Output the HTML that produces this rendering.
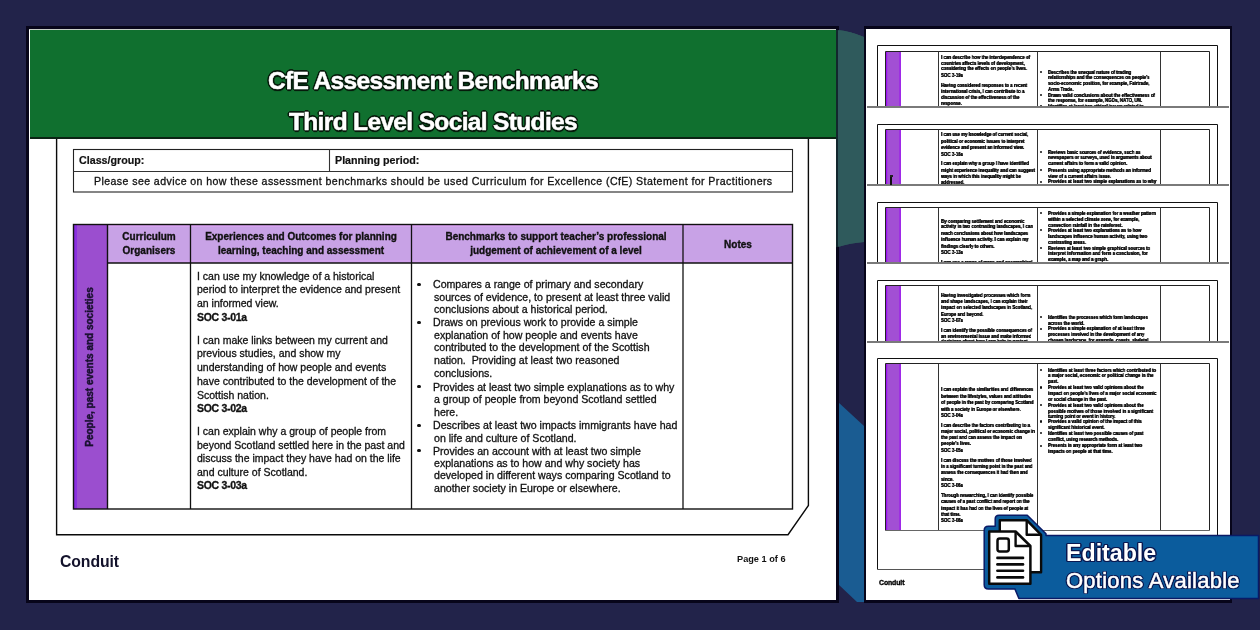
<!DOCTYPE html><html><head><meta charset="utf-8"><style>
html,body{margin:0;padding:0;}
body{width:1260px;height:630px;overflow:hidden;position:relative;background:#22234a;font-family:"Liberation Sans",sans-serif;}
.t{position:absolute;white-space:nowrap;line-height:1;will-change:transform;}
.r{position:absolute;}
</style></head><body>
<svg style="position:absolute;left:0;top:0" width="1260" height="630">
<path d="M836,30 Q850,31 864,37 L864,242 Q850,243 838,247 Z" fill="#2f5a5c"/>
<path d="M838,402 L864,426 L864,602 L857,602 L838,584 Z" fill="#1a5c92"/>
</svg>
<div class="r" style="left:26.00px;top:26.00px;width:813.00px;height:577.00px;background:#07051a;"></div>
<div class="r" style="left:29.00px;top:29.00px;width:807.00px;height:571.00px;background:#ffffff;"></div>
<div class="r" style="left:29.00px;top:29.00px;width:807.00px;height:1.00px;background:#c9cfc9;"></div>
<div class="r" style="left:30.00px;top:30.00px;width:806.00px;height:107.00px;background:#10702f;"></div>
<div class="r" style="left:30.00px;top:137.00px;width:806.00px;height:2.00px;background:#0b2414;"></div>
<svg style="position:absolute;left:0;top:0" width="1260" height="630">
<path d="M837.6,30 Q850,31 864,37 L864,242 Q850,243 837.6,247 Z" fill="#2f5a5c"/>
<path d="M836,30 L837.6,30 L837.6,247 L836,247.3 Z" fill="#12282c"/>
</svg>
<div class="t" style="left:33.00px;width:800px;text-align:center;top:68.56px;font-size:24.5px;font-weight:bold;color:#fff;letter-spacing:-0.65px;text-shadow:-1.2px -1.2px 0 #061a0b,1.2px -1.2px 0 #061a0b,-1.2px 1.2px 0 #061a0b,1.2px 1.2px 0 #061a0b,0 1.8px 0 #061a0b,0 -1.8px 0 #061a0b,1.8px 0 0 #061a0b,-1.8px 0 0 #061a0b,0.6px 2px 1px #061a0b;-webkit-text-stroke:0.5px #fff;">CfE Assessment Benchmarks</div>
<div class="t" style="left:33.00px;width:800px;text-align:center;top:109.96px;font-size:24.5px;font-weight:bold;color:#fff;letter-spacing:-0.65px;text-shadow:-1.2px -1.2px 0 #061a0b,1.2px -1.2px 0 #061a0b,-1.2px 1.2px 0 #061a0b,1.2px 1.2px 0 #061a0b,0 1.8px 0 #061a0b,0 -1.8px 0 #061a0b,1.8px 0 0 #061a0b,-1.8px 0 0 #061a0b,0.6px 2px 1px #061a0b;-webkit-text-stroke:0.5px #fff;">Third Level Social Studies</div>
<svg style="position:absolute;left:0;top:0" width="1260" height="630">
<polyline points="56.6,139 56.6,534.7 788,534.7 808.4,505.5 808.4,139" fill="none" stroke="#0a0a0a" stroke-width="1.4"/>
</svg>
<svg style="position:absolute;left:0;top:0" width="1260" height="630">
<rect x="73.5" y="149.5" width="719" height="42.5" fill="none" stroke="#222" stroke-width="1.1"/>
<line x1="73.5" y1="171.5" x2="792.5" y2="171.5" stroke="#333" stroke-width="1.1"/>
<line x1="329.5" y1="149.5" x2="329.5" y2="171.5" stroke="#333" stroke-width="1.1"/>
</svg>
<div class="t" style="left:78.70px;top:154.84px;font-size:10.7px;font-weight:bold;color:#111;-webkit-text-stroke:0.2px #111;">Class/group:</div>
<div class="t" style="left:334.50px;top:154.84px;font-size:10.7px;font-weight:bold;color:#111;-webkit-text-stroke:0.2px #111;">Planning period:</div>
<div class="t" style="left:93.60px;top:176.03px;font-size:10.6px;font-weight:normal;color:#111;letter-spacing:0.41px;-webkit-text-stroke:0.3px #111;">Please see advice on how these assessment benchmarks should be used Curriculum for Excellence (CfE) Statement for Practitioners</div>
<div class="r" style="left:73.50px;top:224.50px;width:34.00px;height:284.50px;background:#9b4ecf;"></div>
<div class="r" style="left:73.50px;top:224.50px;width:3.00px;height:284.50px;background:#8a2fe0;"></div>
<div class="r" style="left:107.50px;top:224.50px;width:685.00px;height:38.50px;background:#c8a2e6;"></div>
<div class="r" style="left:107.50px;top:224.50px;width:685.00px;height:2.80px;background:#d6a2f0;"></div>
<div class="r" style="left:107.50px;top:259.80px;width:685.00px;height:3.20px;background:#d2a2ee;"></div>
<svg style="position:absolute;left:0;top:0" width="1260" height="630">
<rect x="73.5" y="224.5" width="719.0" height="284.5" fill="none" stroke="#111" stroke-width="1.4"/>
<line x1="107.5" y1="224.5" x2="107.5" y2="509.0" stroke="#111" stroke-width="1.4"/>
<line x1="190.5" y1="224.5" x2="190.5" y2="509.0" stroke="#111" stroke-width="1.3"/>
<line x1="411.5" y1="224.5" x2="411.5" y2="509.0" stroke="#111" stroke-width="1.3"/>
<line x1="683.0" y1="224.5" x2="683.0" y2="509.0" stroke="#111" stroke-width="1.3"/>
<line x1="107.5" y1="263.0" x2="792.5" y2="263.0" stroke="#111" stroke-width="1.4"/>
</svg>
<div class="t" style="left:-251.00px;width:800px;text-align:center;top:231.94px;font-size:10.0px;font-weight:bold;color:#111;-webkit-text-stroke:0.35px #111;">Curriculum</div>
<div class="t" style="left:-251.00px;width:800px;text-align:center;top:246.34px;font-size:10.0px;font-weight:bold;color:#111;-webkit-text-stroke:0.35px #111;">Organisers</div>
<div class="t" style="left:-99.00px;width:800px;text-align:center;top:231.94px;font-size:10.0px;font-weight:bold;color:#111;-webkit-text-stroke:0.35px #111;">Experiences and Outcomes for planning</div>
<div class="t" style="left:-99.00px;width:800px;text-align:center;top:246.34px;font-size:10.0px;font-weight:bold;color:#111;-webkit-text-stroke:0.35px #111;">learning, teaching and assessment</div>
<div class="t" style="left:155.85px;width:800px;text-align:center;top:231.94px;font-size:10.0px;font-weight:bold;color:#111;-webkit-text-stroke:0.35px #111;">Benchmarks to support teacher’s professional</div>
<div class="t" style="left:155.85px;width:800px;text-align:center;top:246.34px;font-size:10.0px;font-weight:bold;color:#111;-webkit-text-stroke:0.35px #111;">judgement of achievement of a level</div>
<div class="t" style="left:337.75px;width:800px;text-align:center;top:239.63px;font-size:10.0px;font-weight:bold;color:#111;-webkit-text-stroke:0.35px #111;">Notes</div>
<div class="t" style="left:-9.8px;top:362.0px;width:200px;text-align:center;font-size:10px;font-weight:bold;color:#1a1030;transform:rotate(-90deg);transform-origin:center center;letter-spacing:0px;-webkit-text-stroke:0.45px #1a1030;">People, past events and societies</div>
<div class="t" style="left:196.60px;top:270.61px;font-size:10.5px;font-weight:normal;color:#111;-webkit-text-stroke:0.3px #111;">I can use my knowledge of a historical</div>
<div class="t" style="left:196.60px;top:284.21px;font-size:10.5px;font-weight:normal;color:#111;-webkit-text-stroke:0.3px #111;">period to interpret the evidence and present</div>
<div class="t" style="left:196.60px;top:298.11px;font-size:10.5px;font-weight:normal;color:#111;-webkit-text-stroke:0.3px #111;">an informed view.</div>
<div class="t" style="left:196.60px;top:311.71px;font-size:10.5px;font-weight:normal;color:#111;-webkit-text-stroke:0.3px #111;"><b style="letter-spacing:-0.3px">SOC 3-01a</b></div>
<div class="t" style="left:196.60px;top:334.91px;font-size:10.5px;font-weight:normal;color:#111;-webkit-text-stroke:0.3px #111;">I can make links between my current and</div>
<div class="t" style="left:196.60px;top:348.41px;font-size:10.5px;font-weight:normal;color:#111;-webkit-text-stroke:0.3px #111;">previous studies, and show my</div>
<div class="t" style="left:196.60px;top:362.21px;font-size:10.5px;font-weight:normal;color:#111;-webkit-text-stroke:0.3px #111;">understanding of how people and events</div>
<div class="t" style="left:196.60px;top:375.81px;font-size:10.5px;font-weight:normal;color:#111;-webkit-text-stroke:0.3px #111;">have contributed to the development of the</div>
<div class="t" style="left:196.60px;top:389.51px;font-size:10.5px;font-weight:normal;color:#111;-webkit-text-stroke:0.3px #111;">Scottish nation.</div>
<div class="t" style="left:196.60px;top:402.61px;font-size:10.5px;font-weight:normal;color:#111;-webkit-text-stroke:0.3px #111;"><b style="letter-spacing:-0.3px">SOC 3-02a</b></div>
<div class="t" style="left:196.60px;top:426.01px;font-size:10.5px;font-weight:normal;color:#111;-webkit-text-stroke:0.3px #111;">I can explain why a group of people from</div>
<div class="t" style="left:196.60px;top:439.51px;font-size:10.5px;font-weight:normal;color:#111;-webkit-text-stroke:0.3px #111;">beyond Scotland settled here in the past and</div>
<div class="t" style="left:196.60px;top:453.11px;font-size:10.5px;font-weight:normal;color:#111;-webkit-text-stroke:0.3px #111;">discuss the impact they have had on the life</div>
<div class="t" style="left:196.60px;top:466.81px;font-size:10.5px;font-weight:normal;color:#111;-webkit-text-stroke:0.3px #111;">and culture of Scotland.</div>
<div class="t" style="left:196.60px;top:480.41px;font-size:10.5px;font-weight:normal;color:#111;-webkit-text-stroke:0.3px #111;"><b style="letter-spacing:-0.3px">SOC 3-03a</b></div>
<div class="r" style="left:417.00px;top:282.60px;width:3.60px;height:3.60px;background:#111;border-radius:50%;"></div>
<div class="t" style="left:432.90px;top:279.23px;font-size:10.6px;font-weight:normal;color:#111;-webkit-text-stroke:0.3px #111;">Compares a range of primary and secondary</div>
<div class="t" style="left:434.00px;top:291.93px;font-size:10.6px;font-weight:normal;color:#111;-webkit-text-stroke:0.3px #111;">sources of evidence, to present at least three valid</div>
<div class="t" style="left:434.00px;top:303.83px;font-size:10.6px;font-weight:normal;color:#111;-webkit-text-stroke:0.3px #111;">conclusions about a historical period.</div>
<div class="r" style="left:417.00px;top:320.80px;width:3.60px;height:3.60px;background:#111;border-radius:50%;"></div>
<div class="t" style="left:432.90px;top:317.43px;font-size:10.6px;font-weight:normal;color:#111;-webkit-text-stroke:0.3px #111;">Draws on previous work to provide a simple</div>
<div class="t" style="left:434.00px;top:329.63px;font-size:10.6px;font-weight:normal;color:#111;-webkit-text-stroke:0.3px #111;">explanation of how people and events have</div>
<div class="t" style="left:434.00px;top:342.03px;font-size:10.6px;font-weight:normal;color:#111;-webkit-text-stroke:0.3px #111;">contributed to the development of the Scottish</div>
<div class="t" style="left:434.00px;top:355.03px;font-size:10.6px;font-weight:normal;color:#111;-webkit-text-stroke:0.3px #111;">nation.&nbsp; Providing at least two reasoned</div>
<div class="t" style="left:434.00px;top:367.63px;font-size:10.6px;font-weight:normal;color:#111;-webkit-text-stroke:0.3px #111;">conclusions.</div>
<div class="r" style="left:417.00px;top:384.90px;width:3.60px;height:3.60px;background:#111;border-radius:50%;"></div>
<div class="t" style="left:432.90px;top:381.53px;font-size:10.6px;font-weight:normal;color:#111;-webkit-text-stroke:0.3px #111;">Provides at least two simple explanations as to why</div>
<div class="t" style="left:434.00px;top:394.13px;font-size:10.6px;font-weight:normal;color:#111;-webkit-text-stroke:0.3px #111;">a group of people from beyond Scotland settled</div>
<div class="t" style="left:434.00px;top:406.53px;font-size:10.6px;font-weight:normal;color:#111;-webkit-text-stroke:0.3px #111;">here.</div>
<div class="r" style="left:417.00px;top:423.60px;width:3.60px;height:3.60px;background:#111;border-radius:50%;"></div>
<div class="t" style="left:432.90px;top:420.23px;font-size:10.6px;font-weight:normal;color:#111;-webkit-text-stroke:0.3px #111;">Describes at least two impacts immigrants have had</div>
<div class="t" style="left:434.00px;top:432.63px;font-size:10.6px;font-weight:normal;color:#111;-webkit-text-stroke:0.3px #111;">on life and culture of Scotland.</div>
<div class="r" style="left:417.00px;top:448.90px;width:3.60px;height:3.60px;background:#111;border-radius:50%;"></div>
<div class="t" style="left:432.90px;top:445.53px;font-size:10.6px;font-weight:normal;color:#111;-webkit-text-stroke:0.3px #111;">Provides an account with at least two simple</div>
<div class="t" style="left:434.00px;top:458.03px;font-size:10.6px;font-weight:normal;color:#111;-webkit-text-stroke:0.3px #111;">explanations as to how and why society has</div>
<div class="t" style="left:434.00px;top:470.43px;font-size:10.6px;font-weight:normal;color:#111;-webkit-text-stroke:0.3px #111;">developed in different ways comparing Scotland to</div>
<div class="t" style="left:434.00px;top:482.63px;font-size:10.6px;font-weight:normal;color:#111;-webkit-text-stroke:0.3px #111;">another society in Europe or elsewhere.</div>
<div class="t" style="left:59.90px;top:554.23px;font-size:15.8px;font-weight:bold;color:#13122b;letter-spacing:-0.1px;">Conduit</div>
<div class="t" style="left:736.80px;top:554.71px;font-size:9.2px;font-weight:bold;color:#111;">Page 1 of 6</div>
<div class="r" style="left:864.00px;top:26.00px;width:368.00px;height:577.00px;background:#07051a;"></div>
<div class="r" style="left:866.00px;top:29.00px;width:363.50px;height:571.00px;background:#ffffff;"></div>
<svg style="position:absolute;left:0;top:0" width="1260" height="630">
<rect x="885.4" y="51.5" width="15.5" height="55.8" fill="#a24fd4"/>
<line x1="886.6" y1="51.5" x2="886.6" y2="107.3" stroke="#9a10f0" stroke-width="1.2"/>
<line x1="900.1" y1="51.5" x2="900.1" y2="107.3" stroke="#9a10f0" stroke-width="1.2"/>
<polyline points="877.5,107.3 877.5,45.5 1217.5,45.5 1217.5,107.3" fill="none" stroke="#111" stroke-width="1"/>
<line x1="885.5" y1="51.5" x2="1209.5" y2="51.5" stroke="#222" stroke-width="1"/>
<line x1="885.5" y1="51.5" x2="885.5" y2="107.3" stroke="#222" stroke-width="1"/>
<line x1="938.5" y1="51.5" x2="938.5" y2="107.3" stroke="#333" stroke-width="1"/>
<line x1="1037.5" y1="51.5" x2="1037.5" y2="107.3" stroke="#333" stroke-width="1"/>
<line x1="1160.5" y1="51.5" x2="1160.5" y2="107.3" stroke="#333" stroke-width="1"/>
<line x1="1209.5" y1="51.5" x2="1209.5" y2="107.3" stroke="#222" stroke-width="1"/>
<line x1="867" y1="107.3" x2="1229" y2="107.3" stroke="#8a8a8a" stroke-width="1.8"/>
<rect x="885.4" y="129.5" width="15.5" height="55.69999999999999" fill="#a24fd4"/>
<line x1="886.6" y1="129.5" x2="886.6" y2="185.2" stroke="#9a10f0" stroke-width="1.2"/>
<line x1="900.1" y1="129.5" x2="900.1" y2="185.2" stroke="#9a10f0" stroke-width="1.2"/>
<polyline points="877.5,185.2 877.5,124.5 1217.5,124.5 1217.5,185.2" fill="none" stroke="#111" stroke-width="1"/>
<line x1="885.5" y1="129.5" x2="1209.5" y2="129.5" stroke="#222" stroke-width="1"/>
<line x1="885.5" y1="129.5" x2="885.5" y2="185.2" stroke="#222" stroke-width="1"/>
<line x1="938.5" y1="129.5" x2="938.5" y2="185.2" stroke="#333" stroke-width="1"/>
<line x1="1037.5" y1="129.5" x2="1037.5" y2="185.2" stroke="#333" stroke-width="1"/>
<line x1="1160.5" y1="129.5" x2="1160.5" y2="185.2" stroke="#333" stroke-width="1"/>
<line x1="1209.5" y1="129.5" x2="1209.5" y2="185.2" stroke="#222" stroke-width="1"/>
<line x1="867" y1="185.2" x2="1229" y2="185.2" stroke="#8a8a8a" stroke-width="1.8"/>
<rect x="885.4" y="207.5" width="15.5" height="55.69999999999999" fill="#a24fd4"/>
<line x1="886.6" y1="207.5" x2="886.6" y2="263.2" stroke="#9a10f0" stroke-width="1.2"/>
<line x1="900.1" y1="207.5" x2="900.1" y2="263.2" stroke="#9a10f0" stroke-width="1.2"/>
<polyline points="877.5,263.2 877.5,202.5 1217.5,202.5 1217.5,263.2" fill="none" stroke="#111" stroke-width="1"/>
<line x1="885.5" y1="207.5" x2="1209.5" y2="207.5" stroke="#222" stroke-width="1"/>
<line x1="885.5" y1="207.5" x2="885.5" y2="263.2" stroke="#222" stroke-width="1"/>
<line x1="938.5" y1="207.5" x2="938.5" y2="263.2" stroke="#333" stroke-width="1"/>
<line x1="1037.5" y1="207.5" x2="1037.5" y2="263.2" stroke="#333" stroke-width="1"/>
<line x1="1160.5" y1="207.5" x2="1160.5" y2="263.2" stroke="#333" stroke-width="1"/>
<line x1="1209.5" y1="207.5" x2="1209.5" y2="263.2" stroke="#222" stroke-width="1"/>
<line x1="867" y1="263.2" x2="1229" y2="263.2" stroke="#8a8a8a" stroke-width="1.8"/>
<rect x="885.4" y="285.5" width="15.5" height="56.5" fill="#a24fd4"/>
<line x1="886.6" y1="285.5" x2="886.6" y2="342.0" stroke="#9a10f0" stroke-width="1.2"/>
<line x1="900.1" y1="285.5" x2="900.1" y2="342.0" stroke="#9a10f0" stroke-width="1.2"/>
<polyline points="877.5,342.0 877.5,280.5 1217.5,280.5 1217.5,342.0" fill="none" stroke="#111" stroke-width="1"/>
<line x1="885.5" y1="285.5" x2="1209.5" y2="285.5" stroke="#222" stroke-width="1"/>
<line x1="885.5" y1="285.5" x2="885.5" y2="342.0" stroke="#222" stroke-width="1"/>
<line x1="938.5" y1="285.5" x2="938.5" y2="342.0" stroke="#333" stroke-width="1"/>
<line x1="1037.5" y1="285.5" x2="1037.5" y2="342.0" stroke="#333" stroke-width="1"/>
<line x1="1160.5" y1="285.5" x2="1160.5" y2="342.0" stroke="#333" stroke-width="1"/>
<line x1="1209.5" y1="285.5" x2="1209.5" y2="342.0" stroke="#222" stroke-width="1"/>
<line x1="867" y1="342.0" x2="1229" y2="342.0" stroke="#8a8a8a" stroke-width="1.8"/>
<rect x="885.4" y="363.5" width="15.5" height="167.0" fill="#a24fd4"/>
<line x1="886.6" y1="363.5" x2="886.6" y2="530.5" stroke="#9a10f0" stroke-width="1.2"/>
<line x1="900.1" y1="363.5" x2="900.1" y2="530.5" stroke="#9a10f0" stroke-width="1.2"/>
<polyline points="877.5,569.5 877.5,358.5 1217.5,358.5 1217.5,569.5" fill="none" stroke="#111" stroke-width="1"/>
<line x1="885.5" y1="363.5" x2="1209.5" y2="363.5" stroke="#222" stroke-width="1"/>
<line x1="885.5" y1="363.5" x2="885.5" y2="530.5" stroke="#222" stroke-width="1"/>
<line x1="938.5" y1="363.5" x2="938.5" y2="530.5" stroke="#333" stroke-width="1"/>
<line x1="1037.5" y1="363.5" x2="1037.5" y2="530.5" stroke="#333" stroke-width="1"/>
<line x1="1160.5" y1="363.5" x2="1160.5" y2="530.5" stroke="#333" stroke-width="1"/>
<line x1="1209.5" y1="363.5" x2="1209.5" y2="530.5" stroke="#222" stroke-width="1"/>
<line x1="885.5" y1="530.5" x2="1209.5" y2="530.5" stroke="#666" stroke-width="1"/>
<line x1="877.5" y1="569.5" x2="1217.5" y2="569.5" stroke="#555" stroke-width="1.1"/>
</svg>
<div class="t" style="left:941.00px;top:54.51px;font-size:5.3px;font-weight:bold;color:#111;transform:scaleX(0.8302);transform-origin:0 0;text-shadow:0.3px 0 0 #111,0 0.15px 0 #111;color:#111;">I can describe how the interdependence of</div>
<div class="t" style="left:941.00px;top:60.51px;font-size:5.3px;font-weight:bold;color:#111;transform:scaleX(0.8302);transform-origin:0 0;text-shadow:0.3px 0 0 #111,0 0.15px 0 #111;color:#111;">countries affects levels of development,</div>
<div class="t" style="left:941.00px;top:66.41px;font-size:5.3px;font-weight:bold;color:#111;transform:scaleX(0.8302);transform-origin:0 0;text-shadow:0.3px 0 0 #111,0 0.15px 0 #111;color:#111;">considering the effects on people’s lives.</div>
<div class="t" style="left:941.00px;top:72.71px;font-size:5.3px;font-weight:bold;color:#111;transform:scaleX(0.8302);transform-origin:0 0;text-shadow:0.3px 0 0 #111,0 0.15px 0 #111;color:#111;">SOC 3-19a</div>
<div class="t" style="left:941.00px;top:83.11px;font-size:5.3px;font-weight:bold;color:#111;transform:scaleX(0.8302);transform-origin:0 0;text-shadow:0.3px 0 0 #111,0 0.15px 0 #111;color:#111;">Having considered responses to a recent</div>
<div class="t" style="left:941.00px;top:89.11px;font-size:5.3px;font-weight:bold;color:#111;transform:scaleX(0.8302);transform-origin:0 0;text-shadow:0.3px 0 0 #111,0 0.15px 0 #111;color:#111;">international crisis, I can contribute to a</div>
<div class="t" style="left:941.00px;top:95.41px;font-size:5.3px;font-weight:bold;color:#111;transform:scaleX(0.8302);transform-origin:0 0;text-shadow:0.3px 0 0 #111,0 0.15px 0 #111;color:#111;">discussion of the effectiveness of the</div>
<div class="t" style="left:941.00px;top:101.31px;font-size:5.3px;font-weight:bold;color:#111;transform:scaleX(0.8302);transform-origin:0 0;text-shadow:0.3px 0 0 #111,0 0.15px 0 #111;color:#111;">response.</div>
<div class="r" style="left:1040.0px;top:71.00px;width:2.2px;height:2.2px;background:#111;border-radius:50%"></div>
<div class="t" style="left:1047.80px;top:69.61px;font-size:5.3px;font-weight:bold;color:#111;transform:scaleX(0.8302);transform-origin:0 0;text-shadow:0.3px 0 0 #111,0 0.15px 0 #111;color:#111;">Describes the unequal nature of trading</div>
<div class="t" style="left:1047.80px;top:75.11px;font-size:5.3px;font-weight:bold;color:#111;transform:scaleX(0.8302);transform-origin:0 0;text-shadow:0.3px 0 0 #111,0 0.15px 0 #111;color:#111;">relationships and the consequences on people’s</div>
<div class="t" style="left:1047.80px;top:81.21px;font-size:5.3px;font-weight:bold;color:#111;transform:scaleX(0.8302);transform-origin:0 0;text-shadow:0.3px 0 0 #111,0 0.15px 0 #111;color:#111;">socio-economic position, for example, Fairtrade,</div>
<div class="t" style="left:1047.80px;top:86.71px;font-size:5.3px;font-weight:bold;color:#111;transform:scaleX(0.8302);transform-origin:0 0;text-shadow:0.3px 0 0 #111,0 0.15px 0 #111;color:#111;">Arms Trade.</div>
<div class="r" style="left:1040.0px;top:94.00px;width:2.2px;height:2.2px;background:#111;border-radius:50%"></div>
<div class="t" style="left:1047.80px;top:92.61px;font-size:5.3px;font-weight:bold;color:#111;transform:scaleX(0.8302);transform-origin:0 0;text-shadow:0.3px 0 0 #111,0 0.15px 0 #111;color:#111;">Draws valid conclusions about the effectiveness of</div>
<div class="t" style="left:1047.80px;top:98.11px;font-size:5.3px;font-weight:bold;color:#111;transform:scaleX(0.8302);transform-origin:0 0;text-shadow:0.3px 0 0 #111,0 0.15px 0 #111;color:#111;">the response, for example, NGOs, NATO, UN.</div>
<div class="r" style="left:1040.0px;top:105.10px;width:2.2px;height:2.2px;background:#111;border-radius:50%"></div>
<div class="t" style="left:1047.80px;top:103.71px;font-size:5.3px;font-weight:bold;color:#111;transform:scaleX(0.8302);transform-origin:0 0;text-shadow:0.3px 0 0 #111,0 0.15px 0 #111;color:#111;">Identifies at least two ethical issues related to</div>
<div class="t" style="left:941.00px;top:132.41px;font-size:5.3px;font-weight:bold;color:#111;transform:scaleX(0.8302);transform-origin:0 0;text-shadow:0.3px 0 0 #111,0 0.15px 0 #111;color:#111;">I can use my knowledge of current social,</div>
<div class="t" style="left:941.00px;top:138.71px;font-size:5.3px;font-weight:bold;color:#111;transform:scaleX(0.8302);transform-origin:0 0;text-shadow:0.3px 0 0 #111,0 0.15px 0 #111;color:#111;">political or economic issues to interpret</div>
<div class="t" style="left:941.00px;top:144.91px;font-size:5.3px;font-weight:bold;color:#111;transform:scaleX(0.8302);transform-origin:0 0;text-shadow:0.3px 0 0 #111,0 0.15px 0 #111;color:#111;">evidence and present an informed view.</div>
<div class="t" style="left:941.00px;top:151.51px;font-size:5.3px;font-weight:bold;color:#111;transform:scaleX(0.8302);transform-origin:0 0;text-shadow:0.3px 0 0 #111,0 0.15px 0 #111;color:#111;">SOC 3-16a</div>
<div class="t" style="left:941.00px;top:160.71px;font-size:5.3px;font-weight:bold;color:#111;transform:scaleX(0.8302);transform-origin:0 0;text-shadow:0.3px 0 0 #111,0 0.15px 0 #111;color:#111;">I can explain why a group I have identified</div>
<div class="t" style="left:941.00px;top:167.51px;font-size:5.3px;font-weight:bold;color:#111;transform:scaleX(0.8302);transform-origin:0 0;text-shadow:0.3px 0 0 #111,0 0.15px 0 #111;color:#111;">might experience inequality and can suggest</div>
<div class="t" style="left:941.00px;top:173.71px;font-size:5.3px;font-weight:bold;color:#111;transform:scaleX(0.8302);transform-origin:0 0;text-shadow:0.3px 0 0 #111,0 0.15px 0 #111;color:#111;">ways in which this inequality might be</div>
<div class="t" style="left:941.00px;top:179.91px;font-size:5.3px;font-weight:bold;color:#111;transform:scaleX(0.8302);transform-origin:0 0;text-shadow:0.3px 0 0 #111,0 0.15px 0 #111;color:#111;">addressed.</div>
<div class="r" style="left:1040.0px;top:151.00px;width:2.2px;height:2.2px;background:#111;border-radius:50%"></div>
<div class="t" style="left:1047.80px;top:149.61px;font-size:5.3px;font-weight:bold;color:#111;transform:scaleX(0.8302);transform-origin:0 0;text-shadow:0.3px 0 0 #111,0 0.15px 0 #111;color:#111;">Reviews basic sources of evidence, such as</div>
<div class="t" style="left:1047.80px;top:155.41px;font-size:5.3px;font-weight:bold;color:#111;transform:scaleX(0.8302);transform-origin:0 0;text-shadow:0.3px 0 0 #111,0 0.15px 0 #111;color:#111;">newspapers or surveys, used in arguments about</div>
<div class="t" style="left:1047.80px;top:161.01px;font-size:5.3px;font-weight:bold;color:#111;transform:scaleX(0.8302);transform-origin:0 0;text-shadow:0.3px 0 0 #111,0 0.15px 0 #111;color:#111;">current affairs to form a valid opinion.</div>
<div class="r" style="left:1040.0px;top:169.10px;width:2.2px;height:2.2px;background:#111;border-radius:50%"></div>
<div class="t" style="left:1047.80px;top:167.71px;font-size:5.3px;font-weight:bold;color:#111;transform:scaleX(0.8302);transform-origin:0 0;text-shadow:0.3px 0 0 #111,0 0.15px 0 #111;color:#111;">Presents using appropriate methods an informed</div>
<div class="t" style="left:1047.80px;top:173.51px;font-size:5.3px;font-weight:bold;color:#111;transform:scaleX(0.8302);transform-origin:0 0;text-shadow:0.3px 0 0 #111,0 0.15px 0 #111;color:#111;">view of a current affairs issue.</div>
<div class="r" style="left:1040.0px;top:180.80px;width:2.2px;height:2.2px;background:#111;border-radius:50%"></div>
<div class="t" style="left:1047.80px;top:179.41px;font-size:5.3px;font-weight:bold;color:#111;transform:scaleX(0.8302);transform-origin:0 0;text-shadow:0.3px 0 0 #111,0 0.15px 0 #111;color:#111;">Provides at least two simple explanations as to why</div>
<div class="t" style="left:941.00px;top:218.71px;font-size:5.3px;font-weight:bold;color:#111;transform:scaleX(0.8302);transform-origin:0 0;text-shadow:0.3px 0 0 #111,0 0.15px 0 #111;color:#111;">By comparing settlement and economic</div>
<div class="t" style="left:941.00px;top:224.41px;font-size:5.3px;font-weight:bold;color:#111;transform:scaleX(0.8302);transform-origin:0 0;text-shadow:0.3px 0 0 #111,0 0.15px 0 #111;color:#111;">activity in two contrasting landscapes, I can</div>
<div class="t" style="left:941.00px;top:231.01px;font-size:5.3px;font-weight:bold;color:#111;transform:scaleX(0.8302);transform-origin:0 0;text-shadow:0.3px 0 0 #111,0 0.15px 0 #111;color:#111;">reach conclusions about how landscapes</div>
<div class="t" style="left:941.00px;top:236.91px;font-size:5.3px;font-weight:bold;color:#111;transform:scaleX(0.8302);transform-origin:0 0;text-shadow:0.3px 0 0 #111,0 0.15px 0 #111;color:#111;">influence human activity. I can explain my</div>
<div class="t" style="left:941.00px;top:243.71px;font-size:5.3px;font-weight:bold;color:#111;transform:scaleX(0.8302);transform-origin:0 0;text-shadow:0.3px 0 0 #111,0 0.15px 0 #111;color:#111;">findings clearly to others.</div>
<div class="t" style="left:941.00px;top:249.71px;font-size:5.3px;font-weight:bold;color:#111;transform:scaleX(0.8302);transform-origin:0 0;text-shadow:0.3px 0 0 #111,0 0.15px 0 #111;color:#111;">SOC 3-13a</div>
<div class="t" style="left:941.00px;top:259.51px;font-size:5.3px;font-weight:bold;color:#111;transform:scaleX(0.8302);transform-origin:0 0;text-shadow:0.3px 0 0 #111,0 0.15px 0 #111;color:#111;">I can use a range of maps and geographical</div>
<div class="r" style="left:1040.0px;top:212.20px;width:2.2px;height:2.2px;background:#111;border-radius:50%"></div>
<div class="t" style="left:1047.80px;top:210.81px;font-size:5.3px;font-weight:bold;color:#111;transform:scaleX(0.8302);transform-origin:0 0;text-shadow:0.3px 0 0 #111,0 0.15px 0 #111;color:#111;">Provides a simple explanation for a weather pattern</div>
<div class="t" style="left:1047.80px;top:216.71px;font-size:5.3px;font-weight:bold;color:#111;transform:scaleX(0.8302);transform-origin:0 0;text-shadow:0.3px 0 0 #111,0 0.15px 0 #111;color:#111;">within a selected climate zone, for example,</div>
<div class="t" style="left:1047.80px;top:222.51px;font-size:5.3px;font-weight:bold;color:#111;transform:scaleX(0.8302);transform-origin:0 0;text-shadow:0.3px 0 0 #111,0 0.15px 0 #111;color:#111;">convection rainfall in the rainforest.</div>
<div class="r" style="left:1040.0px;top:229.30px;width:2.2px;height:2.2px;background:#111;border-radius:50%"></div>
<div class="t" style="left:1047.80px;top:227.91px;font-size:5.3px;font-weight:bold;color:#111;transform:scaleX(0.8302);transform-origin:0 0;text-shadow:0.3px 0 0 #111,0 0.15px 0 #111;color:#111;">Provides at least two explanations as to how</div>
<div class="t" style="left:1047.80px;top:234.11px;font-size:5.3px;font-weight:bold;color:#111;transform:scaleX(0.8302);transform-origin:0 0;text-shadow:0.3px 0 0 #111,0 0.15px 0 #111;color:#111;">landscapes influence human activity, using two</div>
<div class="t" style="left:1047.80px;top:239.71px;font-size:5.3px;font-weight:bold;color:#111;transform:scaleX(0.8302);transform-origin:0 0;text-shadow:0.3px 0 0 #111,0 0.15px 0 #111;color:#111;">contrasting areas.</div>
<div class="r" style="left:1040.0px;top:246.90px;width:2.2px;height:2.2px;background:#111;border-radius:50%"></div>
<div class="t" style="left:1047.80px;top:245.51px;font-size:5.3px;font-weight:bold;color:#111;transform:scaleX(0.8302);transform-origin:0 0;text-shadow:0.3px 0 0 #111,0 0.15px 0 #111;color:#111;">Reviews at least two simple graphical sources to</div>
<div class="t" style="left:1047.80px;top:251.31px;font-size:5.3px;font-weight:bold;color:#111;transform:scaleX(0.8302);transform-origin:0 0;text-shadow:0.3px 0 0 #111,0 0.15px 0 #111;color:#111;">interpret information and form a conclusion, for</div>
<div class="t" style="left:1047.80px;top:257.21px;font-size:5.3px;font-weight:bold;color:#111;transform:scaleX(0.8302);transform-origin:0 0;text-shadow:0.3px 0 0 #111,0 0.15px 0 #111;color:#111;">example, a map and a graph.</div>
<div class="t" style="left:941.00px;top:292.51px;font-size:5.3px;font-weight:bold;color:#111;transform:scaleX(0.8302);transform-origin:0 0;text-shadow:0.3px 0 0 #111,0 0.15px 0 #111;color:#111;">Having investigated processes which form</div>
<div class="t" style="left:941.00px;top:299.11px;font-size:5.3px;font-weight:bold;color:#111;transform:scaleX(0.8302);transform-origin:0 0;text-shadow:0.3px 0 0 #111,0 0.15px 0 #111;color:#111;">and shape landscapes,  I can explain their</div>
<div class="t" style="left:941.00px;top:305.01px;font-size:5.3px;font-weight:bold;color:#111;transform:scaleX(0.8302);transform-origin:0 0;text-shadow:0.3px 0 0 #111,0 0.15px 0 #111;color:#111;">impact on selected landscapes in Scotland,</div>
<div class="t" style="left:941.00px;top:311.61px;font-size:5.3px;font-weight:bold;color:#111;transform:scaleX(0.8302);transform-origin:0 0;text-shadow:0.3px 0 0 #111,0 0.15px 0 #111;color:#111;">Europe and beyond.</div>
<div class="t" style="left:941.00px;top:317.81px;font-size:5.3px;font-weight:bold;color:#111;transform:scaleX(0.8302);transform-origin:0 0;text-shadow:0.3px 0 0 #111,0 0.15px 0 #111;color:#111;">SOC 3-07a</div>
<div class="t" style="left:941.00px;top:327.71px;font-size:5.3px;font-weight:bold;color:#111;transform:scaleX(0.8302);transform-origin:0 0;text-shadow:0.3px 0 0 #111,0 0.15px 0 #111;color:#111;">I can identify the possible consequences of</div>
<div class="t" style="left:941.00px;top:333.61px;font-size:5.3px;font-weight:bold;color:#111;transform:scaleX(0.8302);transform-origin:0 0;text-shadow:0.3px 0 0 #111,0 0.15px 0 #111;color:#111;">an environmental issue and make informed</div>
<div class="t" style="left:941.00px;top:339.01px;font-size:5.3px;font-weight:bold;color:#111;transform:scaleX(0.8302);transform-origin:0 0;text-shadow:0.3px 0 0 #111,0 0.15px 0 #111;color:#111;">decisions about how I can help to protect</div>
<div class="r" style="left:1040.0px;top:316.30px;width:2.2px;height:2.2px;background:#111;border-radius:50%"></div>
<div class="t" style="left:1047.80px;top:314.91px;font-size:5.3px;font-weight:bold;color:#111;transform:scaleX(0.8302);transform-origin:0 0;text-shadow:0.3px 0 0 #111,0 0.15px 0 #111;color:#111;">Identifies the processes which form landscapes</div>
<div class="t" style="left:1047.80px;top:320.61px;font-size:5.3px;font-weight:bold;color:#111;transform:scaleX(0.8302);transform-origin:0 0;text-shadow:0.3px 0 0 #111,0 0.15px 0 #111;color:#111;">across the world.</div>
<div class="r" style="left:1040.0px;top:327.50px;width:2.2px;height:2.2px;background:#111;border-radius:50%"></div>
<div class="t" style="left:1047.80px;top:326.11px;font-size:5.3px;font-weight:bold;color:#111;transform:scaleX(0.8302);transform-origin:0 0;text-shadow:0.3px 0 0 #111,0 0.15px 0 #111;color:#111;">Provides a simple explanation of at least three</div>
<div class="t" style="left:1047.80px;top:331.81px;font-size:5.3px;font-weight:bold;color:#111;transform:scaleX(0.8302);transform-origin:0 0;text-shadow:0.3px 0 0 #111,0 0.15px 0 #111;color:#111;">processes involved in the development of any</div>
<div class="t" style="left:1047.80px;top:337.81px;font-size:5.3px;font-weight:bold;color:#111;transform:scaleX(0.8302);transform-origin:0 0;text-shadow:0.3px 0 0 #111,0 0.15px 0 #111;color:#111;">chosen landscape, for example, coasts, skeletal,</div>
<div class="t" style="left:941.00px;top:387.41px;font-size:5.3px;font-weight:bold;color:#111;transform:scaleX(0.8302);transform-origin:0 0;text-shadow:0.3px 0 0 #111,0 0.15px 0 #111;color:#111;">I can explain the similarities and differences</div>
<div class="t" style="left:941.00px;top:394.11px;font-size:5.3px;font-weight:bold;color:#111;transform:scaleX(0.8302);transform-origin:0 0;text-shadow:0.3px 0 0 #111,0 0.15px 0 #111;color:#111;">between the lifestyles, values and attitudes</div>
<div class="t" style="left:941.00px;top:400.11px;font-size:5.3px;font-weight:bold;color:#111;transform:scaleX(0.8302);transform-origin:0 0;text-shadow:0.3px 0 0 #111,0 0.15px 0 #111;color:#111;">of people in the past by comparing Scotland</div>
<div class="t" style="left:941.00px;top:406.81px;font-size:5.3px;font-weight:bold;color:#111;transform:scaleX(0.8302);transform-origin:0 0;text-shadow:0.3px 0 0 #111,0 0.15px 0 #111;color:#111;">with a society in Europe or elsewhere.</div>
<div class="t" style="left:941.00px;top:412.81px;font-size:5.3px;font-weight:bold;color:#111;transform:scaleX(0.8302);transform-origin:0 0;text-shadow:0.3px 0 0 #111,0 0.15px 0 #111;color:#111;">SOC 3-04a</div>
<div class="t" style="left:941.00px;top:423.11px;font-size:5.3px;font-weight:bold;color:#111;transform:scaleX(0.8302);transform-origin:0 0;text-shadow:0.3px 0 0 #111,0 0.15px 0 #111;color:#111;">I can describe the factors contributing to a</div>
<div class="t" style="left:941.00px;top:429.21px;font-size:5.3px;font-weight:bold;color:#111;transform:scaleX(0.8302);transform-origin:0 0;text-shadow:0.3px 0 0 #111,0 0.15px 0 #111;color:#111;">major social, political or economic change in</div>
<div class="t" style="left:941.00px;top:435.41px;font-size:5.3px;font-weight:bold;color:#111;transform:scaleX(0.8302);transform-origin:0 0;text-shadow:0.3px 0 0 #111,0 0.15px 0 #111;color:#111;">the past and can assess the impact on</div>
<div class="t" style="left:941.00px;top:441.41px;font-size:5.3px;font-weight:bold;color:#111;transform:scaleX(0.8302);transform-origin:0 0;text-shadow:0.3px 0 0 #111,0 0.15px 0 #111;color:#111;">people’s lives.</div>
<div class="t" style="left:941.00px;top:448.21px;font-size:5.3px;font-weight:bold;color:#111;transform:scaleX(0.8302);transform-origin:0 0;text-shadow:0.3px 0 0 #111,0 0.15px 0 #111;color:#111;">SOC 3-05a</div>
<div class="t" style="left:941.00px;top:458.11px;font-size:5.3px;font-weight:bold;color:#111;transform:scaleX(0.8302);transform-origin:0 0;text-shadow:0.3px 0 0 #111,0 0.15px 0 #111;color:#111;">I can discuss the motives of those involved</div>
<div class="t" style="left:941.00px;top:464.11px;font-size:5.3px;font-weight:bold;color:#111;transform:scaleX(0.8302);transform-origin:0 0;text-shadow:0.3px 0 0 #111,0 0.15px 0 #111;color:#111;">in a significant turning point in the past and</div>
<div class="t" style="left:941.00px;top:470.31px;font-size:5.3px;font-weight:bold;color:#111;transform:scaleX(0.8302);transform-origin:0 0;text-shadow:0.3px 0 0 #111,0 0.15px 0 #111;color:#111;">assess the consequences it had then and</div>
<div class="t" style="left:941.00px;top:476.61px;font-size:5.3px;font-weight:bold;color:#111;transform:scaleX(0.8302);transform-origin:0 0;text-shadow:0.3px 0 0 #111,0 0.15px 0 #111;color:#111;">since.</div>
<div class="t" style="left:941.00px;top:482.61px;font-size:5.3px;font-weight:bold;color:#111;transform:scaleX(0.8302);transform-origin:0 0;text-shadow:0.3px 0 0 #111,0 0.15px 0 #111;color:#111;">SOC 3-06a</div>
<div class="t" style="left:941.00px;top:493.01px;font-size:5.3px;font-weight:bold;color:#111;transform:scaleX(0.8302);transform-origin:0 0;text-shadow:0.3px 0 0 #111,0 0.15px 0 #111;color:#111;">Through researching, I can identify possible</div>
<div class="t" style="left:941.00px;top:499.31px;font-size:5.3px;font-weight:bold;color:#111;transform:scaleX(0.8302);transform-origin:0 0;text-shadow:0.3px 0 0 #111,0 0.15px 0 #111;color:#111;">causes of a past conflict and report on the</div>
<div class="t" style="left:941.00px;top:506.01px;font-size:5.3px;font-weight:bold;color:#111;transform:scaleX(0.8302);transform-origin:0 0;text-shadow:0.3px 0 0 #111,0 0.15px 0 #111;color:#111;">impact it has had on the lives of people at</div>
<div class="t" style="left:941.00px;top:512.21px;font-size:5.3px;font-weight:bold;color:#111;transform:scaleX(0.8302);transform-origin:0 0;text-shadow:0.3px 0 0 #111,0 0.15px 0 #111;color:#111;">that time.</div>
<div class="t" style="left:941.00px;top:518.21px;font-size:5.3px;font-weight:bold;color:#111;transform:scaleX(0.8302);transform-origin:0 0;text-shadow:0.3px 0 0 #111,0 0.15px 0 #111;color:#111;">SOC 3-08a</div>
<div class="r" style="left:1040.0px;top:368.90px;width:2.2px;height:2.2px;background:#111;border-radius:50%"></div>
<div class="t" style="left:1047.80px;top:367.51px;font-size:5.3px;font-weight:bold;color:#111;transform:scaleX(0.8302);transform-origin:0 0;text-shadow:0.3px 0 0 #111,0 0.15px 0 #111;color:#111;">Identifies at least three factors which contributed to</div>
<div class="t" style="left:1047.80px;top:373.11px;font-size:5.3px;font-weight:bold;color:#111;transform:scaleX(0.8302);transform-origin:0 0;text-shadow:0.3px 0 0 #111,0 0.15px 0 #111;color:#111;">a major social, economic or political change in the</div>
<div class="t" style="left:1047.80px;top:379.11px;font-size:5.3px;font-weight:bold;color:#111;transform:scaleX(0.8302);transform-origin:0 0;text-shadow:0.3px 0 0 #111,0 0.15px 0 #111;color:#111;">past.</div>
<div class="r" style="left:1040.0px;top:386.40px;width:2.2px;height:2.2px;background:#111;border-radius:50%"></div>
<div class="t" style="left:1047.80px;top:385.01px;font-size:5.3px;font-weight:bold;color:#111;transform:scaleX(0.8302);transform-origin:0 0;text-shadow:0.3px 0 0 #111,0 0.15px 0 #111;color:#111;">Provides at least two valid opinions about the</div>
<div class="t" style="left:1047.80px;top:391.01px;font-size:5.3px;font-weight:bold;color:#111;transform:scaleX(0.8302);transform-origin:0 0;text-shadow:0.3px 0 0 #111,0 0.15px 0 #111;color:#111;">impact on people’s lives of a major social economic</div>
<div class="t" style="left:1047.80px;top:396.81px;font-size:5.3px;font-weight:bold;color:#111;transform:scaleX(0.8302);transform-origin:0 0;text-shadow:0.3px 0 0 #111,0 0.15px 0 #111;color:#111;">or social change in the past.</div>
<div class="r" style="left:1040.0px;top:404.20px;width:2.2px;height:2.2px;background:#111;border-radius:50%"></div>
<div class="t" style="left:1047.80px;top:402.81px;font-size:5.3px;font-weight:bold;color:#111;transform:scaleX(0.8302);transform-origin:0 0;text-shadow:0.3px 0 0 #111,0 0.15px 0 #111;color:#111;">Provides at least two valid opinions about the</div>
<div class="t" style="left:1047.80px;top:408.51px;font-size:5.3px;font-weight:bold;color:#111;transform:scaleX(0.8302);transform-origin:0 0;text-shadow:0.3px 0 0 #111,0 0.15px 0 #111;color:#111;">possible motives of those involved in a significant</div>
<div class="t" style="left:1047.80px;top:413.81px;font-size:5.3px;font-weight:bold;color:#111;transform:scaleX(0.8302);transform-origin:0 0;text-shadow:0.3px 0 0 #111,0 0.15px 0 #111;color:#111;">turning point or event in history.</div>
<div class="r" style="left:1040.0px;top:420.40px;width:2.2px;height:2.2px;background:#111;border-radius:50%"></div>
<div class="t" style="left:1047.80px;top:419.01px;font-size:5.3px;font-weight:bold;color:#111;transform:scaleX(0.8302);transform-origin:0 0;text-shadow:0.3px 0 0 #111,0 0.15px 0 #111;color:#111;">Provides a valid opinion of the impact of this</div>
<div class="t" style="left:1047.80px;top:425.01px;font-size:5.3px;font-weight:bold;color:#111;transform:scaleX(0.8302);transform-origin:0 0;text-shadow:0.3px 0 0 #111,0 0.15px 0 #111;color:#111;">significant historical event.</div>
<div class="r" style="left:1040.0px;top:432.30px;width:2.2px;height:2.2px;background:#111;border-radius:50%"></div>
<div class="t" style="left:1047.80px;top:430.91px;font-size:5.3px;font-weight:bold;color:#111;transform:scaleX(0.8302);transform-origin:0 0;text-shadow:0.3px 0 0 #111,0 0.15px 0 #111;color:#111;">Identifies at least two possible causes of past</div>
<div class="t" style="left:1047.80px;top:436.51px;font-size:5.3px;font-weight:bold;color:#111;transform:scaleX(0.8302);transform-origin:0 0;text-shadow:0.3px 0 0 #111,0 0.15px 0 #111;color:#111;">conflict, using research methods.</div>
<div class="r" style="left:1040.0px;top:444.50px;width:2.2px;height:2.2px;background:#111;border-radius:50%"></div>
<div class="t" style="left:1047.80px;top:443.11px;font-size:5.3px;font-weight:bold;color:#111;transform:scaleX(0.8302);transform-origin:0 0;text-shadow:0.3px 0 0 #111,0 0.15px 0 #111;color:#111;">Presents in any appropriate form at least two</div>
<div class="t" style="left:1047.80px;top:448.71px;font-size:5.3px;font-weight:bold;color:#111;transform:scaleX(0.8302);transform-origin:0 0;text-shadow:0.3px 0 0 #111,0 0.15px 0 #111;color:#111;">impacts on people at that time.</div>
<div class="r" style="left:867.00px;top:108.20px;width:362.00px;height:5.10px;background:#ffffff;"></div>
<div class="r" style="left:867px;top:106.40px;width:362px;height:1.6px;background:#7a7a7a"></div>
<div class="r" style="left:867.00px;top:186.10px;width:362.00px;height:5.10px;background:#ffffff;"></div>
<div class="r" style="left:867px;top:184.30px;width:362px;height:1.6px;background:#7a7a7a"></div>
<div class="r" style="left:867.00px;top:264.10px;width:362.00px;height:5.10px;background:#ffffff;"></div>
<div class="r" style="left:867px;top:262.30px;width:362px;height:1.6px;background:#7a7a7a"></div>
<div class="r" style="left:867.00px;top:342.90px;width:362.00px;height:5.10px;background:#ffffff;"></div>
<div class="r" style="left:867px;top:341.10px;width:362px;height:1.6px;background:#7a7a7a"></div>
<div class="t" style="left:879.00px;top:579.66px;font-size:6.9px;font-weight:bold;color:#000;letter-spacing:-0.1px;-webkit-text-stroke:0.35px #000;">Conduit</div>
<svg style="position:absolute;left:0;top:0" width="1260" height="630">
<path d="M999,515.2 L1027.3,515.2 L1046,533.8 L1046,535.5 L1258.5,535.5 L1258.5,598.5 L1018.9,598.5 L1014.9,588.9 L988.4,588.9 Q984.2,588.9 984.2,584.7 L984.2,530.4 Q984.2,526.2 988.4,526.2 L995.2,526.2 L995.2,519 Q995.2,515.2 999,515.2 Z" fill="#0b5c9d" stroke="#0a1a66" stroke-width="1.5" stroke-linejoin="round"/>
<path d="M999.8,520.2 L1026.7,520.2 L1041.1,534.8 L1041.1,572.2 L999.8,572.2 Z" fill="#fff" stroke="#0a0a0a" stroke-width="2.4" stroke-linejoin="round"/>
<path d="M1026.7,520.2 L1026.7,534.8 L1041.1,534.8" fill="none" stroke="#0a0a0a" stroke-width="2.4" stroke-linejoin="round"/>
<path d="M989.2,531.5 L1015.6,531.5 L1030.4,546 L1030.4,583.7 L989.2,583.7 Z" fill="#fff" stroke="#0a0a0a" stroke-width="2.5" stroke-linejoin="round"/>
<path d="M1015.6,531.5 L1015.6,546 L1030.4,546" fill="none" stroke="#0a0a0a" stroke-width="2.4" stroke-linejoin="round"/>
<rect x="997.5" y="538.5" width="11.3" height="12.9" rx="2.2" fill="#fff" stroke="#0a0a0a" stroke-width="2.5"/>
<g stroke="#0a0a0a" stroke-width="2.6" stroke-linecap="round"><line x1="997.4" y1="557.9" x2="1023.0" y2="557.9"/><line x1="997.4" y1="564.4" x2="1023.0" y2="564.4"/><line x1="997.4" y1="570.8" x2="1023.0" y2="570.8"/><line x1="997.4" y1="577.4" x2="1023.0" y2="577.4"/></g>
</svg>
<div class="t" style="left:1065.60px;top:541.76px;font-size:23.2px;font-weight:bold;color:#fff;text-shadow:-1px -1px 0 #0a1850,1px -1px 0 #0a1850,-1px 1px 0 #0a1850,1px 1px 0 #0a1850,0 1.4px 0 #0a1850,0 -1.4px 0 #0a1850,1.4px 0 0 #0a1850,-1.4px 0 0 #0a1850;">Editable</div>
<div class="t" style="left:1065.90px;top:570.18px;font-size:22.0px;font-weight:normal;color:#fff;letter-spacing:0.25px;text-shadow:-1px -1px 0 #0a1850,1px -1px 0 #0a1850,-1px 1px 0 #0a1850,1px 1px 0 #0a1850,0 1.4px 0 #0a1850,0 -1.4px 0 #0a1850,1.4px 0 0 #0a1850,-1.4px 0 0 #0a1850;-webkit-text-stroke:0.5px #fff;">Options Available</div>
<div class="r" style="left:890.20px;top:175.50px;width:2.20px;height:9.50px;background:#111;"></div>
<div class="r" style="left:889.60px;top:174.50px;width:3.40px;height:2.00px;background:#222;"></div>
</body></html>
